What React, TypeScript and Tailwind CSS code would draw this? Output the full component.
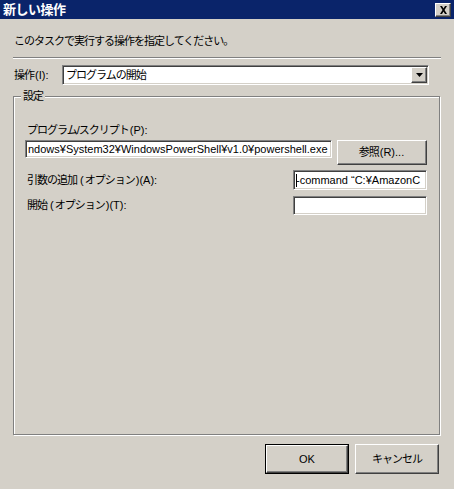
const font = { fontFamily: '"Liberation Sans", "Noto Sans CJK JP", sans-serif' };

const sunken =
  "border border-t-[#808080] border-l-[#808080] border-b-white border-r-white shadow-[inset_1px_1px_0_#404040,inset_-1px_-1px_0_#d4d0c8] bg-white";

const raised =
  "border border-t-white border-l-white border-b-[#404040] border-r-[#404040] shadow-[inset_-1px_-1px_0_#808080] bg-[#d4d0c8]";

// CJK labels: MS UI Gothic-ish narrow look
const jp = "text-[11px] tracking-[-1px]";

// latin bits inside a CJK label keep normal spacing
function L({ children }: { children: React.ReactNode }) {
  return <span className="tracking-normal px-[1px]">{children}</span>;
}

function Field({ text, caret, className }: { text?: string; caret?: boolean; className: string }) {
  return (
    <div className={`${sunken} ${className} flex items-center overflow-hidden whitespace-nowrap pl-[2px] text-[11px] text-black`}>
      {caret && <span className="w-px h-[13px] bg-black mr-[-1px]" />}
      {text}
    </div>
  );
}

export default function App() {
  return (
    <div className="w-[454px] h-[489px] bg-[#d4d0c8] text-black flex flex-col" style={font}>
      {/* title bar */}
      <div className="h-[19px] bg-[#0a246a] flex items-center justify-between pl-[3px] pr-[3px]">
        <span className="text-white font-bold text-[13px] leading-none tracking-[-0.5px]">新しい操作</span>
        <div className={`${raised} w-[16px] h-[14px] flex items-center justify-center`}>
          <svg width="9" height="8" viewBox="0 0 9 8">
            <path d="M1 0h2l1.5 2.5L6 0h2L5.5 4L8 8H6L4.5 5.5L3 8H1l2.5-4z" fill="#000" />
          </svg>
        </div>
      </div>

      <div className="flex flex-col px-[13px]">
        <div className={`mt-[14px] ml-[1px] h-[16px] leading-[16px] ${jp}`}>
          このタスクで実行する操作を指定してください。
        </div>

        <div className="mt-[8px] h-[2px] border-t border-t-[#808080] border-b border-b-white w-[428px]" />

        <div className="mt-[6px] flex items-center h-[20px]">
          <span className={`w-[48px] ml-[1px] ${jp}`}>
            操作<L>(I):</L>
          </span>
          <div className={`${sunken} w-[367px] h-[20px] flex items-center justify-between pl-[3px] pr-[1px] ${jp}`}>
            <span>プログラムの開始</span>
            <div className={`${raised} w-[16px] h-[16px] flex items-center justify-center`}>
              <svg width="7" height="4" viewBox="0 0 7 4">
                <path d="M0 0h7L3.5 4z" fill="#000" />
              </svg>
            </div>
          </div>
        </div>

        {/* group box */}
        <div className="relative mt-[11px] w-[427px] h-[339px] border border-[#808080] shadow-[1px_1px_0_white,inset_1px_1px_0_white]">
          <span className={`absolute left-[7px] -top-[9px] px-[2px] bg-[#d4d0c8] leading-[16px] ${jp}`}>設定</span>

          <div className="flex flex-col pl-[11px] pr-[12px]">
            <div className={`mt-[25px] ml-[2px] h-[16px] leading-[16px] ${jp}`}>
              プログラム/スクリプト<L>(P):</L>
            </div>

            <div className="mt-[2px] flex items-start justify-between">
              <Field
                className="w-[307px] h-[18px]"
                text="ndows¥System32¥WindowsPowerShell¥v1.0¥powershell.exe"
              />
              <div className={`${raised} w-[90px] h-[25px] flex items-center justify-center ${jp}`}>
                参照<L>(R)...</L>
              </div>
            </div>

            <div className="mt-[5px] flex items-center justify-between h-[20px]">
              <span className={`ml-[2px] ${jp}`}>
                引数の追加 <L>(</L>オプション<L>)(A):</L>
              </span>
              <Field className="w-[134px] h-[20px]" caret text="-command “C:¥AmazonC" />
            </div>

            <div className="mt-[6px] flex items-center justify-between h-[19px]">
              <span className={`ml-[2px] ${jp}`}>
                開始 <L>(</L>オプション<L>)(T):</L>
              </span>
              <Field className="w-[134px] h-[19px]" />
            </div>
          </div>
        </div>

        <div className="mt-[9px] flex justify-end gap-[6px] pr-[2px]">
          <div className="border border-black w-[84px] h-[30px]">
            <div className={`${raised} w-full h-full flex items-center justify-center text-[11px]`}>OK</div>
          </div>
          <div className={`${raised} w-[84px] h-[30px] flex items-center justify-center ${jp}`}>キャンセル</div>
        </div>
      </div>
    </div>
  );
}
